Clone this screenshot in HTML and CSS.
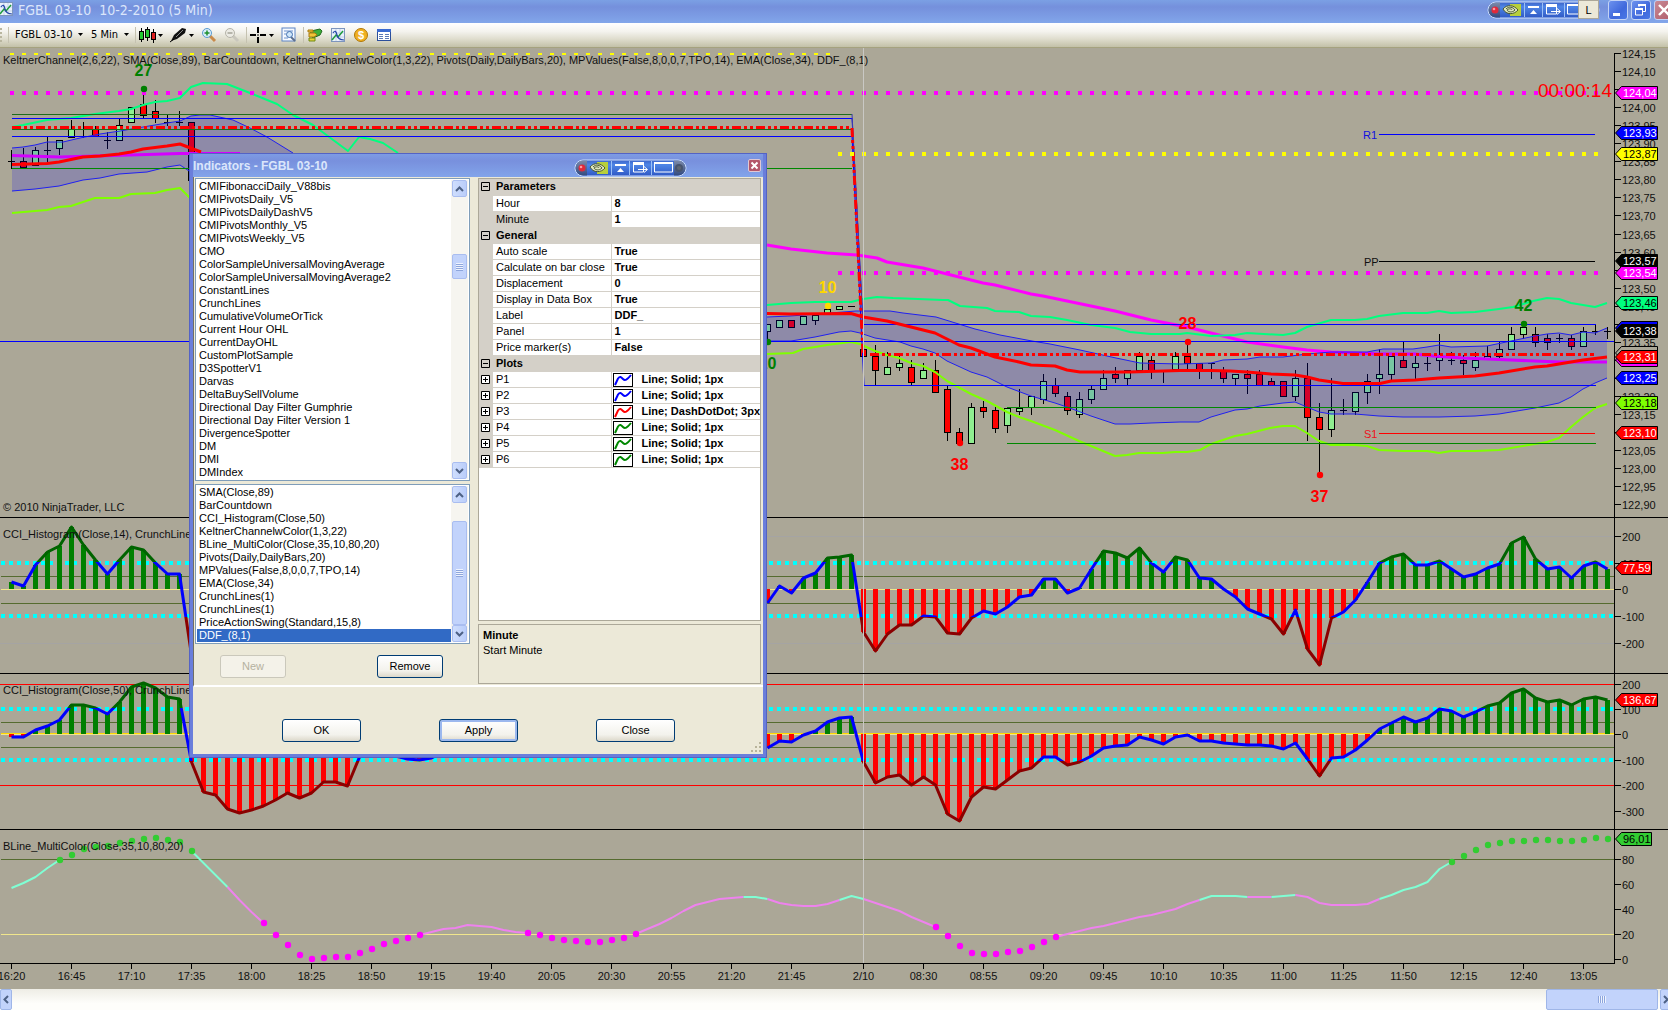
FILE: index.html
```html
<!DOCTYPE html>
<html lang="en">
<head>
<meta charset="utf-8">
<title>FGBL 03-10 10-2-2010 (5 Min)</title>
<link rel="stylesheet" href="styles.css">
</head>
<body>
<svg class="defs" width="0" height="0" aria-hidden="true">
  <defs>
    <linearGradient id="pillFill" x1="0" y1="0" x2="0" y2="1">
      <stop offset="0" stop-color="#3a62c8"/><stop offset=".3" stop-color="#4f86e6"/><stop offset="1" stop-color="#2e57c4"/>
    </linearGradient>
    <linearGradient id="pillEnd" x1="0" y1="0" x2="0" y2="1">
      <stop offset="0" stop-color="#7d8aa8"/><stop offset="1" stop-color="#324a80"/>
    </linearGradient>
    <symbol id="pill" viewBox="0 0 113 18">
      <rect x="1" y="1" width="111" height="16" rx="8" fill="url(#pillFill)" stroke="#cfe0fb"/>
      <path d="M9 1.500H13V16.500H9A7.500 7.500 0 0 1 9 1.500z" fill="url(#pillEnd)"/>
      <path d="M104 1.500H100V16.500H104A7.500 7.500 0 0 0 104 1.500z" fill="url(#pillEnd)"/>
      <circle cx="8" cy="9" r="3.500" fill="#e02a3a"/><circle cx="7" cy="8" r="1.300" fill="#ff9aa0"/>
      <circle cx="105" cy="9" r="4" fill="#47546e"/><circle cx="105" cy="9" r="2" fill="#5f6672"/>
      <path d="M37.500 2v14M55.500 2v14M77.500 2v14" stroke="#9cc0f6"/>
      <rect x="23" y="3" width="11" height="12" fill="#b7cf3c"/>
      <path d="M16 8C20 3 27 4 31 9C27 14 19 14 16 8z" fill="#dfe6c0" stroke="#4a5a30"/>
      <path d="M19 8C22 5 26 6 28 9C25 12 21 11 20 9C22 7 25 8 25 9" fill="none" stroke="#4a5a30"/>
      <path d="M41 5h11v2H41zM46.500 9l3.500 4h-7z" fill="#fff"/>
      <path d="M59.500 4h10v9h-10z" fill="none" stroke="#fff"/><path d="M59 3h11v3H59z" fill="#fff"/>
      <path d="M64 10.500h9M70 7.500l3.500 3l-3.500 3" fill="none" stroke="#fff"/>
      <path d="M80.500 4h18v9h-18z" fill="none" stroke="#fff"/><path d="M80 3h19v2H80z" fill="#fff"/>
    </symbol>
    <symbol id="chartIcon" viewBox="0 0 14 14">
      <rect x=".5" y=".5" width="13" height="13" fill="#eaf2fc" stroke="#7d95bd"/>
      <path d="M1 5h12M1 9h12M5 1v12M9 1v12" stroke="#c4d3ea" fill="none"/>
      <path d="M1 12L5 7l2 2L12 3" fill="none" stroke="#1f9c3c" stroke-width="1.500"/>
      <path d="M2 5c2-3 3-2 4 2s3 5 7 5" fill="none" stroke="#2546a8" stroke-width="1.200"/>
    </symbol>
    <symbol id="caret" viewBox="0 0 5 3"><path d="M0 0h5L2.500 3z"/></symbol>
    <symbol id="up" viewBox="0 0 9 6"><path d="M1 5L4.500 1.500L8 5" fill="none" stroke="#4d6185" stroke-width="2"/></symbol>
    <symbol id="down" viewBox="0 0 9 6"><path d="M1 1L4.500 4.500L8 1" fill="none" stroke="#4d6185" stroke-width="2"/></symbol>
    <symbol id="minus" viewBox="0 0 9 9"><path d="M.5.5h8v8h-8zM2 4.500h5" fill="none" stroke="#000"/></symbol>
    <symbol id="plus" viewBox="0 0 9 9"><path d="M.5.5h8v8h-8zM2 4.500h5M4.500 2v5" fill="#fff" stroke="#000"/></symbol>
    <symbol id="plot" viewBox="0 0 20 14">
      <rect x=".5" y=".5" width="19" height="13" fill="#fff" stroke="#000"/>
      <path d="M2 12L5 5.500C7 3 8 4 10 6S14 7 18 2" fill="none" stroke="currentColor" stroke-width="2"/>
    </symbol>
  </defs>
</svg>

<header class="titlebar">
  <svg class="titlebar-icon" width="13" height="14" viewBox="1 0 13 14"><use href="#chartIcon" width="14" height="14"/></svg>
  <h1 class="titlebar-text">FGBL 03-10&nbsp; 10-2-2010 (5 Min)</h1>
  <div class="monitor-tools">
    <svg width="113" height="20"><use href="#pill" width="113" height="20"/></svg>
    <span class="language">L</span>
  </div>
  <div class="window-buttons">
    <button class="window-button" type="button" aria-label="Minimize"><svg width="18" height="18"><path d="M4 12h7v3H4z" fill="#fff"/></svg></button>
    <button class="window-button" type="button" aria-label="Restore"><svg width="18" height="18"><path d="M3.500 8h7v6h-7zM7 6V4.500h6.500v6H11" fill="none" stroke="#fff"/><path d="M3 7h8v2H3zM6 3h8v2H6z" fill="#fff"/></svg></button>
    <button class="window-button window-button-close" type="button" aria-label="Close"><svg width="18" height="18"><path d="M4 4l10 10M14 4L4 14" stroke="#fff" stroke-width="2.400"/></svg></button>
  </div>
</header>

<nav class="toolbar" aria-label="Chart tools">
  <span class="grip"></span>
  <span class="divider"></span>
  <span class="picker picker-first"><select class="picker-list" aria-label="Instrument"><option>FGBL 03-10</option></select><svg width="5" height="3"><use href="#caret"/></svg></span>
  <span class="picker"><select class="picker-list" aria-label="Period"><option>5 Min</option></select><svg width="5" height="3"><use href="#caret"/></svg></span>
  <span class="divider"></span>
  <button class="tool" type="button" aria-label="Chart style"><svg width="24" height="16">
    <path d="M2.500 1v14M8.500 0v14M14.500 2v14" stroke="#000"/><rect x=".5" y="4.500" width="4" height="8" fill="#22c832" stroke="#000"/><rect x="6.500" y="2.500" width="4" height="8" fill="#22c832" stroke="#000"/><rect x="12.500" y="5.500" width="4" height="7" fill="#e02020" stroke="#000"/><use href="#caret" x="19" y="7" width="5" height="3"/></svg></button>
  <button class="tool" type="button" aria-label="Draw"><svg width="24" height="16"><path d="M1 14L4 8L12 1l4 1l-1 4l-8 6z" fill="#111"/><path d="M6 10l7-7" stroke="#888"/><path d="M0 15l4-3" stroke="#000"/><use href="#caret" x="19" y="7" width="5" height="3"/></svg></button>
  <button class="tool" type="button" aria-label="Zoom in"><svg width="16" height="16"><path d="M9 9l5 5" stroke="#c98a4a" stroke-width="3"/><circle cx="6" cy="6" r="4.500" fill="#d7ecfb" stroke="#5b9bd0"/><path d="M6 3.500v5M3.500 6h5" stroke="#1d8f2c" stroke-width="1.500"/></svg></button>
  <button class="tool" type="button" aria-label="Zoom out" disabled><svg width="16" height="16"><path d="M9 9l5 5" stroke="#c9c7bd" stroke-width="3"/><circle cx="6" cy="6" r="4.500" fill="#ecebe4" stroke="#b5b3a8"/><path d="M3.500 6h5" stroke="#a5a399" stroke-width="1.500"/></svg></button>
  <span class="divider"></span>
  <button class="tool" type="button" aria-label="Crosshair"><svg width="24" height="16"><path d="M8 0v6M8 10v6M0 8h6M10 8h6" stroke="#000" stroke-width="2"/><path d="M8 7v2" stroke="#000"/><use href="#caret" x="19" y="7" width="5" height="3"/></svg></button>
  <button class="tool" type="button" aria-label="Data box"><svg width="16" height="16"><rect x="1" y="1" width="13" height="13" fill="#f6faff" stroke="#5c84c4"/><path d="M3 4h9M3 11h4M3 7h2" stroke="#6f93cd"/><path d="M10 10l4 4" stroke="#5d6f8d" stroke-width="2"/><circle cx="8.500" cy="7.500" r="3" fill="#cfe6fa" stroke="#3f6fae"/></svg></button>
  <span class="divider"></span>
  <button class="tool" type="button" aria-label="Chart trader"><svg width="16" height="16"><path d="M4 4l9-2l2 2l-2 4l-7 3l-3-3z" fill="#3fae3a" stroke="#206a1e"/><path d="M1 3h5v2H1zM2 6h6l2 2l-3 2H2z" fill="#f0c53a" stroke="#a87a12"/><path d="M2 11h6v3H2z" fill="#e8d23a" stroke="#6f8a12"/></svg></button>
  <button class="tool" type="button" aria-label="Indicators"><svg width="16" height="16"><use href="#chartIcon" x="1" y="1" width="14" height="14"/></svg></button>
  <button class="tool" type="button" aria-label="Strategies"><svg width="16" height="16"><circle cx="8" cy="8" r="6.500" fill="#f0b020" stroke="#b07808"/><text class="coin" x="8" y="12" text-anchor="middle">$</text></svg></button>
  <button class="tool" type="button" aria-label="Properties"><svg width="16" height="16"><rect x="1.500" y="2.500" width="13" height="11" fill="#fff" stroke="#2b4f9b"/><path d="M1 2h14v3H1z" fill="#3a6ad0"/><path d="M3 7.500h4M3 9.500h4M3 11.500h4M9 7.500h4M9 9.500h4M9 11.500h4" stroke="#5b7ab5"/></svg></button>
</nav>

<main class="chart">
  <svg id="chart" class="chart-canvas" viewBox="0 48 1668 941" role="img" aria-label="FGBL 03-10 five minute chart"></svg>
</main>

<footer class="scrollbar-x">
  <button class="scroll-step" type="button" aria-label="Scroll left"><svg width="6" height="9"><path d="M5 1L1.500 4.500L5 8" fill="none" stroke="#4d6185" stroke-width="2"/></svg></button>
  <span class="scroll-space"></span>
  <span class="scroll-thumb-x"></span>
  <button class="scroll-step scroll-step-right" type="button" aria-label="Scroll right"><svg width="6" height="9"><path d="M1 1L4.500 4.500L1 8" fill="none" stroke="#4d6185" stroke-width="2"/></svg></button>
</footer>

<section class="dialog" role="dialog" aria-labelledby="dialogTitle">
  <header class="dialog-bar">
    <h2 class="dialog-title" id="dialogTitle">Indicators - FGBL 03-10</h2>
    <svg class="dialog-pill" width="113" height="18"><use href="#pill"/></svg>
    <button class="dialog-close" type="button" aria-label="Close window"><svg width="11" height="11"><path d="M2.500 2.500l6 6M8.500 2.500l-6 6" stroke="#fff" stroke-width="2"/></svg></button>
  </header>
  <div class="dialog-main">
    <div class="lists">
      <div class="listbox">
        <select class="listbox-items" size="23" aria-label="Available indicators">
          <option>CMIFibonacciDaily_V88bis</option><option>CMIPivotsDaily_V5</option><option>CMIPivotsDailyDashV5</option><option>CMIPivotsMonthly_V5</option><option>CMIPivotsWeekly_V5</option><option>CMO</option><option>ColorSampleUniversalMovingAverage</option><option>ColorSampleUniversalMovingAverage2</option><option>ConstantLines</option><option>CrunchLines</option><option>CumulativeVolumeOrTick</option><option>Current Hour OHL</option><option>CurrentDayOHL</option><option>CustomPlotSample</option><option>D3SpotterV1</option><option>Darvas</option><option>DeltaBuySellVolume</option><option>Directional Day Filter Gumphrie</option><option>Directional Day Filter Version 1</option><option>DivergenceSpotter</option><option>DM</option><option>DMI</option><option>DMIndex</option>
        </select>
        <div class="scroll-y">
          <span class="scroll-button"><svg width="9" height="6"><use href="#up"/></svg></span>
          <span class="scroll-track scroll-track-before"></span>
          <span class="scroll-thumb scroll-thumb-short"></span>
          <span class="scroll-track"></span>
          <span class="scroll-button"><svg width="9" height="6"><use href="#down"/></svg></span>
        </div>
      </div>
      <div class="listbox">
        <select class="listbox-items" size="12" aria-label="Applied indicators">
          <option>SMA(Close,89)</option><option>BarCountdown</option><option>CCI_Histogram(Close,50)</option><option>KeltnerChannelwColor(1,3,22)</option><option>BLine_MultiColor(Close,35,10,80,20)</option><option>Pivots(Daily,DailyBars,20)</option><option>MPValues(False,8,0,0,7,TPO,14)</option><option>EMA(Close,34)</option><option>CrunchLines(1)</option><option>CrunchLines(1)</option><option>PriceActionSwing(Standard,15,8)</option><option selected>DDF_(8,1)</option>
        </select>
        <div class="scroll-y">
          <span class="scroll-button"><svg width="9" height="6"><use href="#up"/></svg></span>
          <span class="scroll-track"></span>
          <span class="scroll-thumb scroll-thumb-long"></span>
          <span class="scroll-button"><svg width="9" height="6"><use href="#down"/></svg></span>
        </div>
      </div>
      <div class="list-actions">
        <button class="push push-small" type="button" disabled>New</button>
        <button class="push push-small" type="button">Remove</button>
      </div>
    </div>
    <div class="properties">
      <div class="grid-frame">
        <table class="grid">
          <colgroup><col class="col-gutter"><col class="col-name"><col></colgroup>
          <tbody>
            <tr class="group"><td><svg width="9" height="9"><use href="#minus"/></svg></td><th colspan="2">Parameters</th></tr>
            <tr><td></td><th>Hour</th><td>8</td></tr>
            <tr class="current"><td></td><th>Minute</th><td>1</td></tr>
            <tr class="group"><td><svg width="9" height="9"><use href="#minus"/></svg></td><th colspan="2">General</th></tr>
            <tr><td></td><th>Auto scale</th><td>True</td></tr>
            <tr><td></td><th>Calculate on bar close</th><td>True</td></tr>
            <tr><td></td><th>Displacement</th><td>0</td></tr>
            <tr><td></td><th>Display in Data Box</th><td>True</td></tr>
            <tr><td></td><th>Label</th><td>DDF_</td></tr>
            <tr><td></td><th>Panel</th><td>1</td></tr>
            <tr><td></td><th>Price marker(s)</th><td>False</td></tr>
            <tr class="group"><td><svg width="9" height="9"><use href="#minus"/></svg></td><th colspan="2">Plots</th></tr>
            <tr class="plot plot-blue"><td><svg width="9" height="9"><use href="#plus"/></svg></td><th>P1</th><td><svg width="20" height="14"><use href="#plot"/></svg>Line; Solid; 1px</td></tr>
            <tr class="plot plot-blue"><td><svg width="9" height="9"><use href="#plus"/></svg></td><th>P2</th><td><svg width="20" height="14"><use href="#plot"/></svg>Line; Solid; 1px</td></tr>
            <tr class="plot plot-red"><td><svg width="9" height="9"><use href="#plus"/></svg></td><th>P3</th><td><svg width="20" height="14"><use href="#plot"/></svg>Line; DashDotDot; 3px</td></tr>
            <tr class="plot plot-green"><td><svg width="9" height="9"><use href="#plus"/></svg></td><th>P4</th><td><svg width="20" height="14"><use href="#plot"/></svg>Line; Solid; 1px</td></tr>
            <tr class="plot plot-green"><td><svg width="9" height="9"><use href="#plus"/></svg></td><th>P5</th><td><svg width="20" height="14"><use href="#plot"/></svg>Line; Solid; 1px</td></tr>
            <tr class="plot plot-green"><td><svg width="9" height="9"><use href="#plus"/></svg></td><th>P6</th><td><svg width="20" height="14"><use href="#plot"/></svg>Line; Solid; 1px</td></tr>
          </tbody>
        </table>
      </div>
      <div class="hint"><strong>Minute</strong><p class="hint-text">Start Minute</p></div>
    </div>
  </div>
  <footer class="dialog-actions">
    <button class="push" type="button">OK</button>
    <button class="push push-default" type="button">Apply</button>
    <button class="push" type="button">Close</button>
    <svg class="size-grip" width="12" height="12"><path d="M9 1h2v2H9zM5 5h2v2H5zM9 5h2v2H9zM1 9h2v2H1zM5 9h2v2H5zM9 9h2v2H9z" fill="#b8b49b"/></svg>
  </footer>
</section>
<script src="chart.js"></script>
</body>
</html>
```
FILE: styles.css
```css
* { box-sizing: border-box; }

body {
  margin: 0;
  min-height: 100vh;
  display: flex;
  flex-direction: column;
  position: relative;
  overflow: hidden;
  background: #aba797;
  color: #000;
  font: 11px/13px "Liberation Sans", Arial, sans-serif;
}

button, select { font: inherit; color: inherit; }
button { padding: 0; border: 0; background: none; }
svg { display: block; }
.defs { position: absolute; }

/* Main window title bar */
.titlebar {
  display: flex;
  align-items: flex-start;
  height: 23px;
  background: linear-gradient(#7ba0e4, #7590dc 30%, #7c9ce4 70%, #82a6ea);
  overflow: hidden;
}
.titlebar-icon { margin-top: 2px; }
.titlebar-text {
  flex: 1;
  margin: 0 0 0 5px;
  font: 14px/20px "DejaVu Sans Condensed", "DejaVu Sans", sans-serif;
  color: #dbe6fb;
}
.monitor-tools { position: relative; margin-right: 8px; }
.language {
  position: absolute;
  left: 91px;
  top: 0;
  width: 21px;
  height: 19px;
  border: 1px solid #aca899;
  background: #ece9d8;
  text-align: center;
  line-height: 18px;
}
.window-buttons { display: flex; gap: 3px; margin-right: -6px; }
.window-button {
  width: 20px;
  height: 20px;
  border: 1px solid #c3d3f6;
  border-radius: 3px;
  background: linear-gradient(135deg, #6d92ee, #3f68dc 60%, #4a78e6);
}
.window-button-close { background: linear-gradient(135deg, #c88a96, #b05a68); }

/* Toolbar */
.toolbar {
  display: flex;
  align-items: center;
  gap: 7px;
  height: 25px;
  padding-bottom: 1px;
  background: linear-gradient(#fff, #f4f3ee 35%, #e0decf 65%, #c3c1a8);
  border-bottom: 1px solid #a5a27f;
  font: 11px/13px "DejaVu Sans Condensed", "DejaVu Sans", sans-serif;
}
.grip { width: 2px; height: 14px; background: repeating-linear-gradient(#b9b69f 0 2px, transparent 2px 4px); }
.divider { width: 1px; height: 16px; background: #c5c2b0; margin-left: -1px; margin-right: -4px; }
.picker { display: flex; align-items: center; gap: 5px; }
.picker-first { margin-left: 3px; margin-right: 1px; }
.picker-list { appearance: none; border: 0; padding: 0; background: none; }
.coin { font: bold 11px "Liberation Sans", Arial, sans-serif; fill: #fff; }

/* Chart */
.chart { flex: 1; }
.chart-canvas { width: 100%; height: auto; }
.crisp { shape-rendering: crispEdges; }
.caption, .axis { font-size: 11px; fill: #101010; }
.marker-text { font-size: 11px; fill: #fff; }
.marker-dark { fill: #000; }
.swing { font-size: 16px; font-weight: bold; }
.countdown { font-size: 19px; fill: #f00; }

/* Bottom scrollbar */
.scrollbar-x {
  display: flex;
  gap: 2px;
  height: 21px;
  background: linear-gradient(#eeede5, #fefefb 70%);
  overflow: hidden;
}
.scroll-step {
  flex: none;
  width: 12px;
  display: grid;
  place-items: center;
  border: 1px solid #9fb6e8;
  border-radius: 2px;
  background: #c2d3fb;
}
.scroll-step-right { margin-right: -4px; }
.scroll-space { flex: 1; }
.scroll-thumb-x {
  width: 112px;
  border: 1px solid #9fb6e8;
  border-radius: 2px;
  background: repeating-linear-gradient(90deg, #8ea6dc 0 1px, #eef3fe 1px 2px) center / 8px 7px no-repeat #c2d3fb;
}

/* Indicators dialog */
.dialog {
  position: absolute;
  left: 189px;
  top: 153px;
  width: 578px;
  display: flex;
  flex-direction: column;
  border: solid #6a7edb;
  border-width: 1px 4px 4px;
  outline: 1px solid #5463c4;
  outline-offset: -1px;
  background: #ece9d8;
}
.dialog-bar {
  display: flex;
  height: 23px;
  background: linear-gradient(#7d9be4, #7890dd 30%, #82a4ea);
}
.dialog-title { flex: 1; margin: 0; color: #dbe6fb; font: bold 12px/24px "Liberation Sans", Arial, sans-serif; }
.dialog-pill { margin: 5px 61px 0 0; }
.dialog-close {
  align-self: center;
  width: 13px;
  height: 13px;
  margin-right: 2px;
  border: 1px solid #e0c8d4;
  border-radius: 2px;
  background: #b4566a;
}
.dialog-main {
  display: flex;
  gap: 8px;
  padding: 1px 2px 0 1px;
  border-left: 1px solid #716f64;
  border-bottom: 2px solid #fff;
}
.lists { width: 275px; }
.listbox {
  display: flex;
  margin-bottom: 3px;
  padding: 1px;
  border: 1px solid #7f9db9;
  background: #fff;
}
.listbox-items {
  flex: 1;
  min-width: 0;
  overflow: hidden;
  scrollbar-width: none;
  border: 0;
  border-radius: 0;
  padding: 0;
  outline: 0;
  background: #fff;
}
.listbox-items option { height: 13px; min-height: 13px; padding: 0 2px; line-height: 13px; }
.listbox-items option:checked { background: linear-gradient(#316ac5, #316ac5); color: #fff; }
.scroll-y { display: flex; flex-direction: column; width: 17px; padding: 0 1px; background: #f6f5f0; }
.scroll-button, .scroll-thumb {
  display: grid;
  place-items: center;
  border: 1px solid #a9bdf0;
  border-radius: 2px;
  background: linear-gradient(90deg, #cfdefd, #bacdfa);
}
.scroll-button { height: 17px; }
.scroll-track { flex: 1; }
.scroll-track-before { flex: 0 0 57px; }
.scroll-thumb {
  background: repeating-linear-gradient(#eef3fe 0 1px, #8ea6dc 1px 2px) center / 7px 8px no-repeat #c2d3fb;
}
.scroll-thumb-short { height: 25px; }
.scroll-thumb-long { height: 104px; }
.list-actions { display: flex; justify-content: space-between; padding: 8px 27px 7px 25px; }
.push {
  width: 79px;
  height: 23px;
  border: 1px solid #003c74;
  border-radius: 3px;
  background: linear-gradient(#fff, #f3f2ec 70%, #dcd8ca);
}
.push-small { width: 66px; }
.push-default { box-shadow: inset 0 0 0 2px #9cb8ee; }
.push:disabled { border-color: #cac8bb; color: #b4b19f; background: #f4f2e9; }

.properties { flex: 1; min-width: 0; display: flex; flex-direction: column; gap: 3px; }
.grid-frame { flex: 1; border: 1px solid #aca899; background: #fff; overflow: hidden; }
.grid { width: 100%; table-layout: fixed; border-collapse: collapse; }
.col-gutter { width: 14px; }
.col-name { width: 118px; }
.grid tr { height: 16px; border-bottom: 1px solid #d4d0c8; }
.grid th, .grid td { padding: 0; height: 16px; line-height: 15px; text-align: left; white-space: nowrap; overflow: hidden; }
.grid th { font-weight: normal; padding-left: 3px; border-right: 1px solid #d4d0c8; }
.grid td { font-weight: bold; padding-left: 3px; }
.grid td:first-child { background: #d4d0c8; padding-left: 2px; }
.grid .group, .grid .current th { background: #d4d0c8; }
.grid .group th { font-weight: bold; }
.grid .plot td:last-child { padding-left: 1px; }
.grid .plot td:last-child svg { display: inline-block; vertical-align: top; margin: 1px 9px 0 0; }
.plot-blue svg { color: #00f; }
.plot-red svg { color: #f00; }
.plot-green svg { color: #080; }
.hint { height: 60px; padding: 3px 4px; border: 1px solid #aca899; line-height: 15px; margin-bottom: 1px; }
.hint-text { margin: 0; }
.dialog-actions {
  position: relative;
  display: flex;
  gap: 78px;
  height: 67px;
  padding: 32px 0 0 89px;
}
.size-grip { position: absolute; right: 1px; bottom: 1px; }
```
FILE: chart.js
```js
(function () {
  var STEP = 12, FIRST = 11.5, AXIS = 1614.5;
  var out = [];
  function x(i) { return FIRST + i * STEP; }
  function add(s) { out.push(s); }
  function hline(y, x1, x2, color, w, dash) {
    add('<path class="crisp" d="M' + x1 + ' ' + y + 'H' + x2 + '" fill="none" stroke="' + color + '" stroke-width="' + (w || 1) + '"' +
      (dash ? ' stroke-dasharray="' + dash + '"' : '') + '/>');
  }
  function line(points, color, w, extra) {
    add('<polyline points="' + points + '" fill="none" stroke="' + color + '" stroke-width="' + w + '" stroke-linejoin="round" ' + (extra || '') + '/>');
  }
  function text(cls, tx, ty, s, extra) {
    add('<text class="' + cls + '" x="' + tx + '" y="' + ty + '" ' + (extra || '') + '>' + s + '</text>');
  }
  function dots(y, from, to, color, h) {
    for (var i = from; i <= to; i++) {
      add('<rect class="crisp" x="' + (x(i) - 1.5) + '" y="' + (y - h / 2) + '" width="4" height="' + h + '" fill="' + color + '"/>');
    }
  }

  // Session divider and the study threshold lines
  hline(536.5, 0, AXIS, '#a5a4a3'); hline(643.5, 0, AXIS, '#a5a4a3');
  hline(563, 1, AXIS, '#0ff', 4, '4 4'); hline(616, 1, AXIS, '#0ff', 4, '4 4');
  hline(576.5, 1, AXIS, '#556b2f'); hline(603.5, 1, AXIS, '#556b2f'); hline(589.5, 1, AXIS, '#f0e68c');
  hline(684.5, 0, AXIS, '#f00'); hline(785.5, 0, AXIS, '#f00');
  hline(709, 1, AXIS, '#0ff', 4, '4 4'); hline(760, 1, AXIS, '#0ff', 4, '4 4');
  hline(722.5, 1, AXIS, '#556b2f'); hline(747.5, 1, AXIS, '#556b2f');
  hline(733.5, 1, AXIS, '#ffd700'); hline(734.5, 1, AXIS, '#f0e68c');
  hline(859.5, 1, AXIS, '#556b2f'); hline(934.5, 1, AXIS, '#f0e68c');

  // Candles: index, high, body top, body bottom, low, kind (g up, r down, d doji)
  var candles = '0,150,161,161,168,d|1,148,161,167,167,r|2,147,150,165,165,g|3,137,150,150,162,d|4,140,140,148,154,g|5,120,129,137,137,g|6,122,129,129,137,d|7,126,129,136,136,r|8,132,140,140,148,d|9,118,125,140,140,g|10,107,107,122,122,g|11,95,104,115,117,r|12,100,111,118,122,r|13,115,122,122,125,d|14,111,122,122,125,d|15,122,122,180,190,r|' +
    '63,324,324,331,341,g|64,320,320,327,327,g|65,320,320,327,327,r|66,316,316,324,324,g|67,315,315,320,324,g|68,309,309,313,313,g|69,306,306,309,309,g|70,306,306,306,306,d|71,324,349,356,356,r|72,345,356,370,385,r|73,352,367,374,374,g|74,355,363,367,370,g|75,360,367,382,385,r|76,363,370,378,378,g|77,360,370,392,392,r|78,385,389,432,440,r|79,428,432,443,443,r|80,403,407,443,443,g|81,401,407,411,417,r|82,407,410,428,432,r|83,408,408,425,432,g|84,389,408,411,414,g|85,396,396,407,414,g|86,374,381,399,403,g|87,378,385,393,396,r|88,392,396,410,414,r|89,392,399,414,417,g|90,385,389,399,403,g|91,370,378,389,389,g|92,367,374,378,382,r|93,370,370,378,385,g|94,352,356,370,370,g|95,356,360,370,378,r|96,370,370,370,382,d|97,352,356,369,369,g|' +
    '98,342,356,363,369,r|99,363,363,370,378,r|100,363,363,363,378,d|101,367,370,378,382,r|102,374,374,378,385,g|103,370,374,378,393,r|104,370,374,385,385,r|105,378,381,385,385,r|106,381,381,396,396,r|107,370,378,396,400,g|108,363,378,417,440,r|109,403,417,429,473,r|110,378,410,429,436,g|111,399,410,410,414,d|112,392,392,411,414,g|113,374,381,392,403,g|114,349,374,378,393,g|115,356,356,374,380,g|116,342,360,367,367,r|117,356,363,367,378,g|118,357,363,363,370,d|119,334,357,360,370,g|120,352,360,360,364,d|121,355,360,363,374,r|122,352,360,367,370,g|123,346,356,358,358,g|124,342,349,356,358,g|125,327,334,349,349,g|126,324,327,334,338,g|127,327,334,342,346,r|128,334,338,342,349,r|129,334,338,338,342,d|130,335,338,346,349,r|131,327,331,346,346,g|132,324,331,331,334,d|133,327,331,331,338,d';
  candles.split('|').forEach(function (row) {
    var c = row.split(','), cx = x(+c[0]);
    add('<path class="crisp" d="M' + cx + ' ' + c[1] + 'V' + (+c[4] + 1) + '" stroke="#000"/>');
    if (c[5] === 'd') {
      add('<path class="crisp" d="M' + (cx - 3.5) + ' ' + (+c[2] + .5) + 'h7" stroke="#000"/>');
    } else {
      add('<rect class="crisp" x="' + (cx - 3) + '" y="' + (+c[2] + .5) + '" width="6" height="' + (c[3] - c[2]) + '" stroke="#000" fill="' + (c[5] === 'g' ? '#90ee90' : '#f00') + '"/>');
    }
  });

  // Moving averages and channels
  var upperL = '12,148 23,147 35,145 47,142 63,142 80,138 100,134 120,131 143,127 167,123 180,121 191,116 200,115 210,115 233,120 250,128 267,137 293,153';
  var lowerL = '12,191 35,189 59,186 71,183 83,180 100,178 119,174 147,172 167,167 180,165 189,171';
  var lowerLRev = '293,171 189,171 180,165 167,167 147,172 119,174 100,178 83,180 71,183 59,186 35,189 12,191';
  var upperR = '767,317 790,316 830,313 856,311 890,311 903,313 936,317 949,321 975,329 1000,335 1032,341 1050,344 1080,350 1116,358 1140,363 1180,364 1211,363 1223,360 1247,359 1260,357 1283,357 1307,354 1331,352 1367,352 1383,349 1413,349 1427,347 1439,345 1451,347 1487,346 1511,341 1535,336 1547,334 1559,333 1571,335 1583,332 1595,333 1607,328';
  var lowerR = '767,341 791,341 815,337 839,332 851,331 860,333 875,338 900,342 911,346 923,349 935,353 947,361 971,372 987,377 1007,387 1031,396 1055,403 1067,407 1091,416 1115,424 1130,424 1151,423 1180,422 1199,422 1211,417 1235,410 1247,409 1260,406 1283,403 1295,402 1307,407 1319,412 1331,414 1355,414 1379,416 1403,417 1427,417 1439,417 1475,416 1499,414 1535,408 1559,403 1571,397 1583,389 1595,383 1607,378';
  line('12,155.500 60,157 130,155 180,153.500 240,153.500', '#f0f', 3);
  line('767,245 791,249 827,253 857,255 877,258 887,262 923,268 947,274 983,283 995,285 1031,294 1043,296 1067,301 1091,306 1115,311 1127,314 1151,320 1187,327 1199,330 1223,336 1247,342 1283,347 1307,350 1331,352 1355,353 1380,354 1415,354 1433,356 1463,358 1487,359 1511,360 1535,361 1559,362 1607,362', '#f0f', 3);
  add('<polygon points="' + upperL + ' ' + lowerLRev + '" fill="#00f" fill-opacity=".17"/>');
  add('<polygon points="' + upperR + ' ' + lowerR.split(' ').reverse().join(' ') + '" fill="#00f" fill-opacity=".17"/>');
  [upperL, lowerL, upperR, lowerR].forEach(function (p) { line(p, '#2020f0', 1); });
  line('12,127 23,125 47,120 71,118 95,114 119,111 131,109 143,105 155,102 167,101 180,98 191,87 203,83 227,84 250,93 277,104 293,115 313,125 348,151 359,137 370,139 383,143 398,153', '#00ff7f', 2);
  line('767,305 791,303 815,302 851,302 863,299 877,297 893,298 943,300 948,300 960,306 987,308 995,311 1019,312 1031,316 1050,317 1067,320 1091,325 1115,328 1130,332 1151,334 1180,334 1187,333 1211,336 1235,335 1247,333 1283,335 1295,333 1307,327 1331,320 1355,320 1367,319 1379,316 1403,313 1427,313 1439,311 1451,313 1475,312 1499,309 1513,307 1533,301 1547,298 1559,299 1571,303 1595,307 1607,303', '#00ff7f', 2);
  line('12,213 35,211 47,210 59,207 71,206 95,198 119,198 131,194 155,193 167,190 180,188 190,198', '#7fff00', 2);
  line('767,354 793,353 803,349 827,345 851,342 860,344 875,351 887,355 899,358 911,363 923,366 935,372 947,381 971,394 987,401 1007,412 1019,417 1031,421 1055,430 1079,441 1115,456 1127,455 1139,453 1163,453 1175,452 1187,452 1200,450 1211,444 1223,440 1235,436 1247,434 1270,428 1283,426 1295,426 1307,433 1319,441 1331,445 1355,445 1367,446 1379,450 1403,451 1427,451 1439,453 1451,451 1475,451 1499,450 1535,444 1547,442 1559,438 1571,427 1583,417 1595,408 1607,404', '#7fff00', 2);

  // Price levels of the previous and current session
  hline(341.5, 0, AXIS, '#00f');
  hline(114.5, 12, 852, '#1c6c1c'); hline(168.5, 12, 852, '#080');
  hline(118.5, 12, 852, '#00f'); hline(136.5, 12, 852, '#00f');
  hline(129.5, 12, 852, '#1c6c1c'); hline(127.500, 12, 852, '#f00', 3, '9 3 3 3 3 3');
  line('852,118 863,324', '#00f', 1); line('852,136 864,385', '#00f', 1); line('852,114 863,324', '#3a3ab0', 1);
  line('852,128 863,354', '#f00', 3, 'stroke-dasharray="9 3 3 3 3 3"');
  hline(324.5, 864, 1596, '#00f'); hline(385.5, 864, 1596, '#00f');
  hline(407.5, 1007, 1596, '#080'); hline(443.5, 1007, 1596, '#080');
  hline(354.500, 870, 1594, '#f00', 3, '9 3 3 3 3 3');
  line('12,164.500 47,163.500 59,162 83,157 100,156 119,154 131,152 143,149 167,146 180,144 201,152', '#f00', 3);
  line('767,313.500 791,314 851,313.500 863,317 887,321 911,327 935,333 947,339 959,345 971,348 995,357 1019,362 1031,365 1055,366 1067,370 1080,372 1130,372 1180,370.500 1211,370.500 1230,371 1247,372 1271,374 1295,375 1307,377 1319,380 1343,383.500 1380,383.500 1391,381 1415,380 1427,379 1439,378 1475,376 1499,373 1535,367 1547,366 1571,362 1583,360 1607,357', '#f00', 3);
  hline(134.5, 1379, 1595, '#00f'); hline(261.5, 1379, 1595, '#000'); hline(433.5, 1379, 1595, '#f00');
  dots(54, 0, 68, '#ff0', 2); dots(93, 0, 132, '#f0f', 4); dots(154, 69, 132, '#ff0', 4); dots(273, 69, 132, '#f0f', 4);
  text('axis', 1363, 139, 'R1', 'style="fill:#1010e0"'); text('axis', 1364, 266, 'PP'); text('axis', 1364, 438, 'S1', 'style="fill:#f01020"');

  // Swing labels
  [[11, 89, 76, '27', '#008000'], [63, 342, 369, '10', '#008000'], [68, 306, 293, '10', '#ffd700'], [79, 443, 470, '38', '#f00'],
   [98, 342, 329, '28', '#f00'], [109, 475, 502, '37', '#f00'], [126, 324, 311, '42', '#008000']].forEach(function (s) {
    add('<circle cx="' + (x(s[0]) + .5) + '" cy="' + s[1] + '" r="3.200" fill="' + s[4] + '"/>');
    text('swing', x(s[0]), s[2], s[3], 'text-anchor="middle" fill="' + s[4] + '"');
  });

  // CCI histograms: bars from zero, line coloured by zone
  function histogram(id, runs, zero, hi, lo, top, bottom) {
    add('<clipPath id="' + id + 'a"><rect x="0" y="' + top + '" width="1668" height="' + (hi - top) + '"/></clipPath>' +
      '<clipPath id="' + id + 'b"><rect x="0" y="' + hi + '" width="1668" height="' + (lo - hi) + '"/></clipPath>' +
      '<clipPath id="' + id + 'c"><rect x="0" y="' + lo + '" width="1668" height="' + (bottom - lo) + '"/></clipPath>');
    runs.forEach(function (run) {
      var pts = run[1].map(function (v, k) {
        var cx = x(run[0] + k), y0 = Math.min(v, zero);
        add('<rect class="crisp" x="' + (cx - 2.5) + '" y="' + y0 + '" width="5" height="' + Math.abs(v - zero) + '" fill="' + (v < zero ? '#008000' : '#f00') + '"/>');
        return cx + ',' + v;
      }).join(' ');
      line(pts, '#006400', 3, 'clip-path="url(#' + id + 'a)"');
      line(pts, '#00f', 3, 'clip-path="url(#' + id + 'b)"');
      line(pts, '#8b0000', 3, 'clip-path="url(#' + id + 'c)"');
    });
  }
  histogram('c14', [
    [0, [582, 586, 565, 552, 546, 527, 545, 560, 574, 560, 547, 550, 563, 574, 574, 655]],
    [63, [603, 586, 593, 578, 573, 558, 557, 555, 632, 651, 634, 625, 625, 616, 617, 633, 634, 618, 611, 614, 607, 597, 595, 579, 579, 593, 588, 569, 551, 553, 558, 548, 563, 572, 557, 560, 578, 579, 589, 597, 609, 614, 619, 634, 610, 649, 665, 618, 612, 600, 582, 563, 557, 554, 565, 565, 561, 569, 577, 574, 568, 564, 543, 537, 559, 569, 567, 578, 566, 562, 569]]
  ], 589, 562, 617, 518, 672);
  histogram('c50', [
    [0, [737, 737, 730, 726, 720, 705, 705, 708, 714, 702, 687, 683, 688, 697, 699, 762, 792, 795, 809, 813, 810, 806, 800, 793, 798, 793, 782, 782, 786, 757, 752, 752, 756, 759, 760, 758, 752]],
    [63, [748, 741, 742, 735, 731, 722, 718, 717, 762, 783, 777, 775, 785, 777, 785, 814, 821, 797, 787, 789, 780, 771, 768, 757, 757, 765, 762, 756, 748, 746, 745, 737, 740, 744, 737, 735, 741, 741, 743, 744, 745, 745, 746, 749, 743, 759, 776, 758, 757, 750, 740, 729, 723, 717, 722, 718, 709, 711, 717, 712, 706, 703, 693, 689, 698, 702, 700, 705, 699, 697, 700]]
  ], 734, 708, 761, 674, 828);

  // BLine: dots at the extremes, two-tone line in between
  var b = [888, 883, 877, 868, 860, 855, 849, 847, 846, 843, 841, 839, 838, 840, 842, 851, 863, 875, 887, 900, 912, 923, 935, 945, 955, 959, 958, 957, 957, 953, 949, 944, 941, 938, 935, 932, 929, 928, 925, 926, 927, 930, 932, 933, 935, 938, 940, 941, 942, 942, 940, 938, 934, 929, 924, 918, 911, 905, 902, 899, 898, 897, 897, 899, 903, 905, 906, 906, 904, 900, 896, 899, 903, 907, 911, 917, 922, 927, 936, 946, 953, 954, 954, 952, 951, 947, 942, 937, 934, 931, 928, 926, 923, 920, 917, 915, 912, 909, 904, 900, 896, 896, 896, 897, 897, 897, 896, 895, 897, 903, 905, 905, 905, 904, 899, 895, 890, 887, 882, 869, 862, 856, 850, 845, 843, 841, 841, 840, 840, 841, 841, 840, 838, 839];
  [[0, 4, 1], [15, 18, 1], [18, 21], [34, 43], [52, 61], [61, 63, 1], [63, 69], [69, 71, 1], [71, 77], [87, 99], [99, 103, 1], [103, 105], [105, 107, 1], [107, 114], [114, 120, 1]].forEach(function (r) {
    var pts = [];
    for (var i = r[0]; i <= r[1]; i++) pts.push(x(i) + ',' + b[i]);
    line(pts.join(' '), r[2] ? '#7fffd4' : '#ee82ee', 2);
  });
  [[4, 15, '#32cd32'], [21, 34, '#f0f'], [43, 52, '#f0f'], [77, 87, '#f0f'], [120, 133, '#32cd32']].forEach(function (r) {
    for (var i = r[0]; i <= r[1]; i++) add('<circle cx="' + (x(i) + .5) + '" cy="' + b[i] + '" r="3.200" fill="' + r[2] + '"/>');
  });

  // Captions
  text('caption', 3, 64, 'KeltnerChannel(2,6,22), SMA(Close,89), BarCountdown, KeltnerChannelwColor(1,3,22), Pivots(Daily,DailyBars,20), MPValues(False,8,0,0,7,TPO,14), EMA(Close,34), DDF_(8,1)');
  text('caption', 3, 511, '© 2010 NinjaTrader, LLC');
  text('caption', 3, 538, 'CCI_Histogram(Close,14), CrunchLines(1)');
  text('caption', 3, 694, 'CCI_Histogram(Close,50), CrunchLines(1)');
  text('caption', 3, 850, 'BLine_MultiColor(Close,35,10,80,20)');
  text('countdown', 1612, 97, '00:00:14', 'text-anchor="end"');

  // Frame and axes
  add('<path class="crisp" d="M863.500 48V963" stroke="#c9c8c4"/>');
  hline(517.5, 0, AXIS + 54, '#000'); hline(673.5, 0, AXIS + 54, '#000'); hline(829.5, 0, AXIS + 54, '#000');
  hline(963.5, 0, AXIS, '#000');
  add('<path class="crisp" d="M' + AXIS + ' 53V963" stroke="#000"/>');
  function tick(y, s) { hline(y, AXIS, AXIS + 6, '#000'); text('axis', 1622, y + 4.5, s); }
  for (var k = 0; k <= 25; k++) {
    tick(Math.round(53 + k * 18.05) + .5, ((12415 - k * 5) / 100).toFixed(2).replace('.', ','));
  }
  [[536, 200], [563, 100], [589, 0], [616, -100], [643, -200], [684, 200], [709, 100], [734, 0], [760, -100], [785, -200], [811, -300],
   [859, 80], [884, 60], [909, 40], [934, 20], [959, 0]].forEach(function (t) { tick(t[0] + .5, t[1]); });
  // The session break adds one bar from 2/10 on
  ['16:20', '16:45', '17:10', '17:35', '18:00', '18:25', '18:50', '19:15', '19:40', '20:05', '20:30', '20:55', '21:20', '21:45', '2/10',
   '08:30', '08:55', '09:20', '09:45', '10:10', '10:35', '11:00', '11:25', '11:50', '12:15', '12:40', '13:05'].forEach(function (s, n) {
    var tx = x(n * 5 + (n >= 14 ? 1 : 0));
    add('<path class="crisp" d="M' + tx + ' 963v6" stroke="#000"/>');
    text('axis', tx, 980, s, 'text-anchor="middle"');
  });

  // Price markers
  [[93, '124,04', '#f0f'], [133, '123,93', '#00f'], [154, '123,87', '#ff0', 1], [261, '123,57', '#000'], [273, '123,54', '#f0f'], [303, '123,46', '#00ff7f', 1],
   [328, '', '#00f'], [331, '123,38', '#000'], [353, '', '#aba797'], [360, '', '#f0f'], [357, '123,31', '#f00'], [378, '123,25', '#00f'], [403, '123,18', '#7fff00', 1], [433, '123,10', '#f00'],
   [568, '77,59', '#f00'], [700, '136,67', '#f00'], [839, '96,01', '#32cd32', 1]].forEach(function (m) {
    var y = m[0], r = m[1].length === 5 ? 1651.5 : 1657.5;
    add('<path d="M1615.500 ' + y + 'L1621.500 ' + (y - 6.5) + 'H' + r + 'V' + (y + 6.5) + 'H1621.500Z" fill="' + m[2] + '" stroke="#000"/>');
    if (m[1]) text('marker-text' + (m[3] ? ' marker-dark' : ''), 1623, y + 4, m[1]);
  });

  document.getElementById('chart').innerHTML = out.join('');
})();
```
